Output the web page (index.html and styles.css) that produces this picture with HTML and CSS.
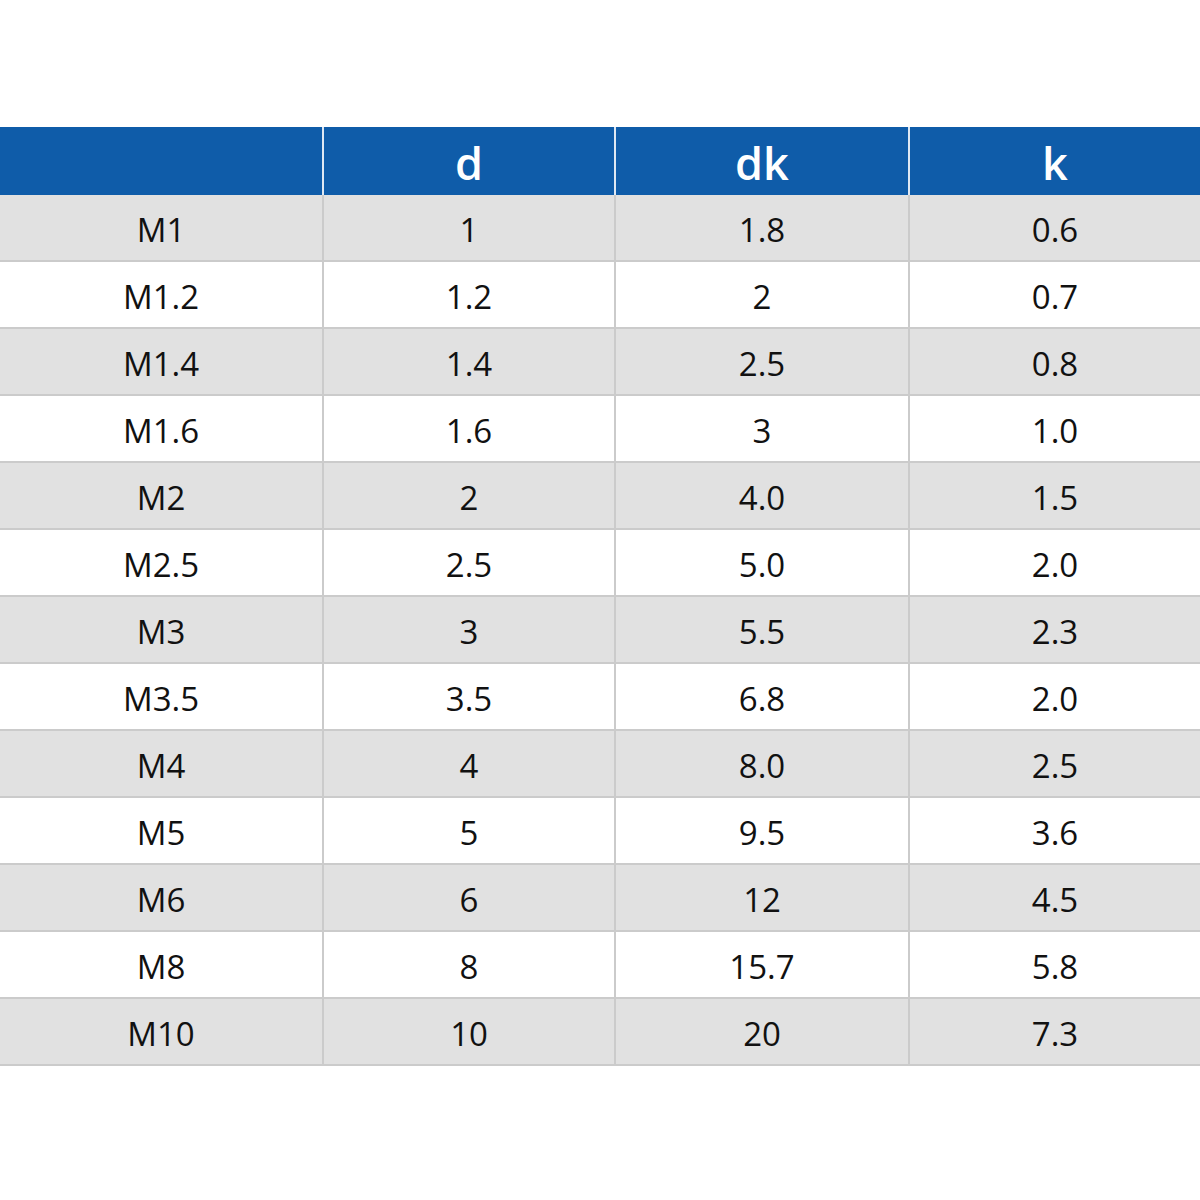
FILE: index.html
```html
<!DOCTYPE html>
<html>
<head>
<meta charset="utf-8">
<link rel="stylesheet" href="styles.css">
</head>
<body>
<div class="table">
  <div class="row head">
    <div class="cell"></div>
    <div class="cell">d</div>
    <div class="cell">dk</div>
    <div class="cell">k</div>
  </div>
  <div class="row gray"><div class="cell">M1</div><div class="cell">1</div><div class="cell">1.8</div><div class="cell">0.6</div></div>
  <div class="row"><div class="cell">M1.2</div><div class="cell">1.2</div><div class="cell">2</div><div class="cell">0.7</div></div>
  <div class="row gray"><div class="cell">M1.4</div><div class="cell">1.4</div><div class="cell">2.5</div><div class="cell">0.8</div></div>
  <div class="row"><div class="cell">M1.6</div><div class="cell">1.6</div><div class="cell">3</div><div class="cell">1.0</div></div>
  <div class="row gray"><div class="cell">M2</div><div class="cell">2</div><div class="cell">4.0</div><div class="cell">1.5</div></div>
  <div class="row"><div class="cell">M2.5</div><div class="cell">2.5</div><div class="cell">5.0</div><div class="cell">2.0</div></div>
  <div class="row gray"><div class="cell">M3</div><div class="cell">3</div><div class="cell">5.5</div><div class="cell">2.3</div></div>
  <div class="row"><div class="cell">M3.5</div><div class="cell">3.5</div><div class="cell">6.8</div><div class="cell">2.0</div></div>
  <div class="row gray"><div class="cell">M4</div><div class="cell">4</div><div class="cell">8.0</div><div class="cell">2.5</div></div>
  <div class="row"><div class="cell">M5</div><div class="cell">5</div><div class="cell">9.5</div><div class="cell">3.6</div></div>
  <div class="row gray"><div class="cell">M6</div><div class="cell">6</div><div class="cell">12</div><div class="cell">4.5</div></div>
  <div class="row"><div class="cell">M8</div><div class="cell">8</div><div class="cell">15.7</div><div class="cell">5.8</div></div>
  <div class="row gray"><div class="cell">M10</div><div class="cell">10</div><div class="cell">20</div><div class="cell">7.3</div></div>
</div>
</body>
</html>
```

FILE: styles.css
```css
html, body {
  margin: 0;
  padding: 0;
  background: #ffffff;
}
body {
  font-family: "Open Sans", "Noto Sans", sans-serif;
  color: #111111;
}
.table {
  margin-top: 127px;
  width: 1200px;
}
.row {
  display: grid;
  grid-template-columns: 324px 292px 294px 290px;
  height: 67px;
  box-sizing: border-box;
  border-bottom: 2px solid #cbcbcb;
  background: #ffffff;
}
.row.gray {
  background: #e1e1e1;
}
.cell {
  display: flex;
  align-items: center;
  justify-content: center;
  font-size: 33px;
  padding-top: 3px;
  border-right: 2px solid #cbcbcb;
  box-sizing: border-box;
}
.cell:last-child {
  border-right: none;
}
.row.head {
  height: 68px;
  background: #0f5ca9;
  border-bottom: none;
}
.row.head .cell {
  color: #ffffff;
  font-size: 45px;
  font-weight: 600;
  align-items: flex-end;
  padding-top: 0;
  padding-bottom: 10px;
  line-height: 1;
  border-right: 2px solid #dfe8f3;
}
.row.head .cell:last-child {
  border-right: none;
}
```
